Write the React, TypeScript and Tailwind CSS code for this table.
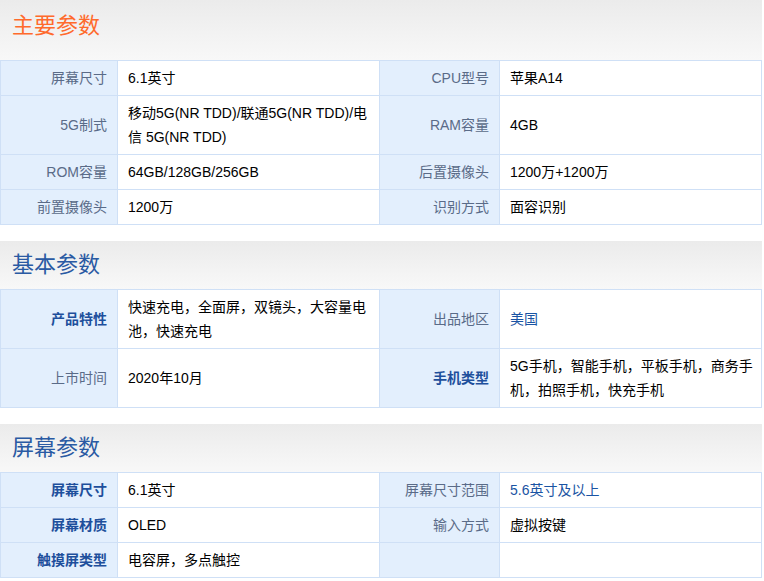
type Cell = {
  label: string;
  value: string;
  strong?: boolean;
  link?: boolean;
};

type Section = {
  title: string;
  accent?: boolean;
  rows: [Cell, Cell][];
};

const sections: Section[] = [
  {
    title: '主要参数',
    accent: true,
    rows: [
      [
        { label: '屏幕尺寸', value: '6.1英寸' },
        { label: 'CPU型号', value: '苹果A14' },
      ],
      [
        { label: '5G制式', value: '移动5G(NR TDD)/联通5G(NR TDD)/电信 5G(NR TDD)' },
        { label: 'RAM容量', value: '4GB' },
      ],
      [
        { label: 'ROM容量', value: '64GB/128GB/256GB' },
        { label: '后置摄像头', value: '1200万+1200万' },
      ],
      [
        { label: '前置摄像头', value: '1200万' },
        { label: '识别方式', value: '面容识别' },
      ],
    ],
  },
  {
    title: '基本参数',
    rows: [
      [
        { label: '产品特性', value: '快速充电，全面屏，双镜头，大容量电池，快速充电', strong: true },
        { label: '出品地区', value: '美国', link: true },
      ],
      [
        { label: '上市时间', value: '2020年10月' },
        { label: '手机类型', value: '5G手机，智能手机，平板手机，商务手机，拍照手机，快充手机', strong: true },
      ],
    ],
  },
  {
    title: '屏幕参数',
    rows: [
      [
        { label: '屏幕尺寸', value: '6.1英寸', strong: true },
        { label: '屏幕尺寸范围', value: '5.6英寸及以上', link: true },
      ],
      [
        { label: '屏幕材质', value: 'OLED', strong: true },
        { label: '输入方式', value: '虚拟按键' },
      ],
      [
        { label: '触摸屏类型', value: '电容屏，多点触控', strong: true },
        { label: '', value: '' },
      ],
    ],
  },
];

function ParamCell({ cell }: { cell: Cell }) {
  return (
    <>
      <div
        className={
          cell.strong
            ? 'flex items-center justify-end border-r border-b border-[#cfe0f6] bg-[#e3effd] py-[5px] pr-[10px] pl-[8px] text-right font-bold text-[#1e4f9c]'
            : 'flex items-center justify-end border-r border-b border-[#cfe0f6] bg-[#e3effd] py-[5px] pr-[10px] pl-[8px] text-right text-[#5a6b88]'
        }
      >
        {cell.label}
      </div>
      <div
        className={
          cell.link
            ? 'flex items-center border-r border-b border-[#cfe0f6] bg-white py-[5px] pr-[8px] pl-[10px] text-[#1a54a3]'
            : 'flex items-center border-r border-b border-[#cfe0f6] bg-white py-[5px] pr-[8px] pl-[10px] text-black'
        }
      >
        <span>{cell.value}</span>
      </div>
    </>
  );
}

export default function App() {
  return (
    <div
      className="w-[764px] bg-white text-[14px] leading-[24px]"
      style={{ fontFamily: '"Liberation Sans", "Noto Sans CJK SC", Arial, sans-serif' }}
    >
      <div className="flex w-[762px] flex-col gap-4">
        {sections.map((section, i) => (
          <div key={section.title}>
            {/* section header */}
            <div
              className={
                i === 0
                  ? 'flex h-[60px] items-start bg-gradient-to-b from-[#ebebeb] to-[#f8f8f8] pt-[13px] pl-[12px]'
                  : 'flex h-[48px] items-center bg-gradient-to-b from-[#ebebeb] to-[#f8f8f8] pl-[12px]'
              }
            >
              <h2
                className={
                  section.accent
                    ? 'text-[22px] leading-[26px] font-normal text-[#ff6a2c]'
                    : 'text-[22px] leading-[26px] font-normal text-[#2a5aa3]'
                }
              >
                {section.title}
              </h2>
            </div>

            {/* params grid */}
            <div className="grid grid-cols-[117px_262px_120px_262px] border-t border-l border-[#cfe0f6]">
              {section.rows.map((row, r) => (
                <div key={r} className="contents">
                  <ParamCell cell={row[0]} />
                  <ParamCell cell={row[1]} />
                </div>
              ))}
            </div>
          </div>
        ))}
      </div>
    </div>
  );
}
